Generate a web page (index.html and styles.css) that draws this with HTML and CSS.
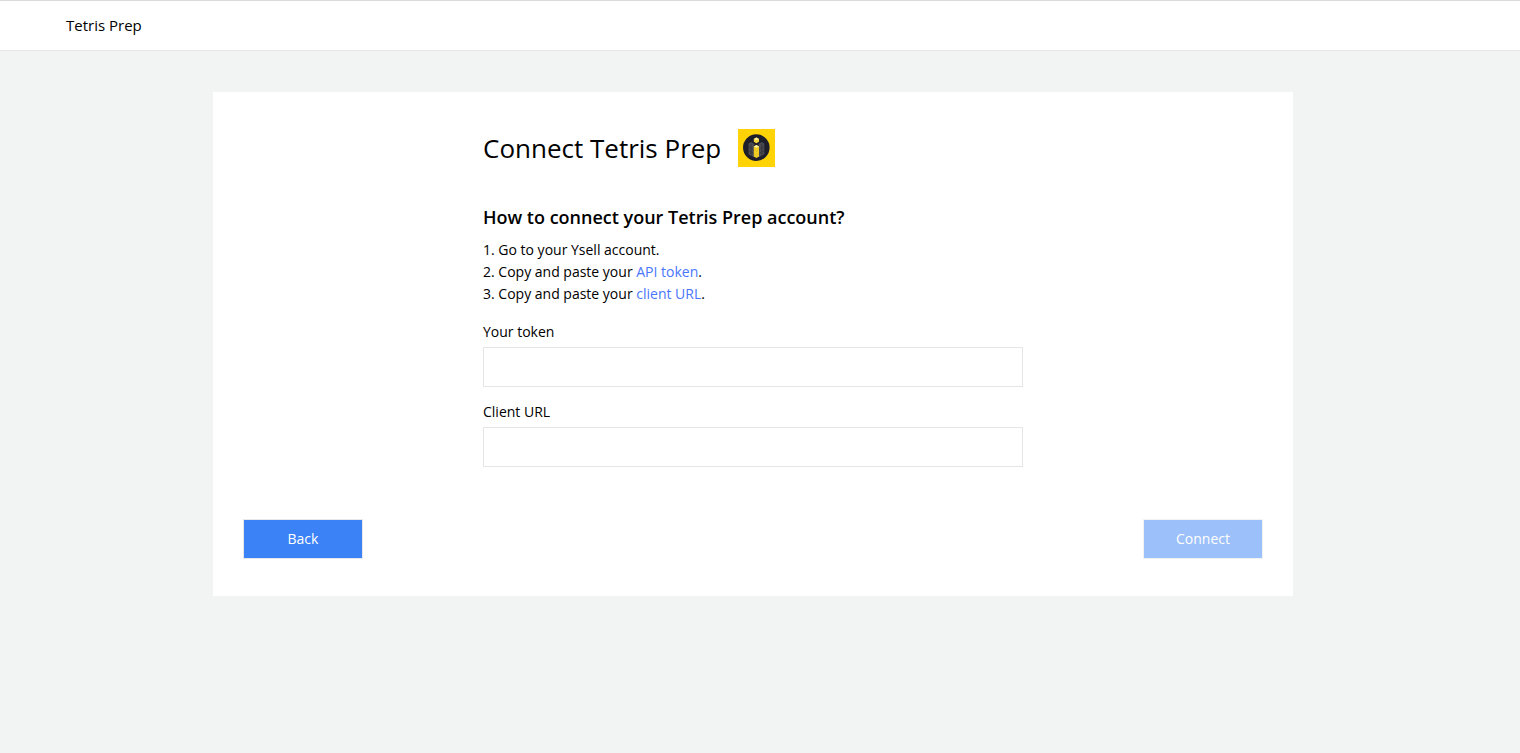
FILE: index.html
```html
<!DOCTYPE html>
<html lang="en">
<head>
    <meta charset="UTF-8">
    <meta name="viewport" content="width=device-width, initial-scale=1.0">
    <title>Connect Tetris Prep</title>
    <link rel="stylesheet" href="styles.css">
</head>
<body>

<header class="topbar">Tetris Prep</header>

<main class="page">
    <form class="card">
        <div class="content">
            <div class="title">
                <h1>Connect Tetris Prep</h1>
                <svg class="logo" viewBox="0 0 37 38" aria-hidden="true">
                    <rect width="37" height="38" fill="#ffd305"/>
                    <circle cx="18.3" cy="18.6" r="13.3" fill="#1e1e2b"/>
                    <path d="M10.5 14.5l2.6-1.5 3.2 2v13.5l-5.8-3.2zM26.3 14.5l-2.6-1.5-3.2 2v13.5l5.8-3.2z" fill="#4b4b50"/>
                    <path d="M10.5 17.5l5 3M10.5 21.5l5 3M26.3 17.5l-5 3M26.3 21.5l-5 3M13 14.8v12M23.8 14.8v12" stroke="#2b2b34" stroke-width=".6" fill="none"/>
                    <path d="M18.4 8.5l2.6 1.4v2.9l-2.6 1.5-2.6-1.5v-2.9z" fill="#f5d33a"/>
                    <path d="M18.4 8.5l2.6 1.4-2.6 1.4-2.6-1.4z" fill="#fff0a0"/>
                    <path d="M18.4 16l2.6 1.4v10l-2.6 1.5-2.6-1.5v-10z" fill="#f2ce25"/>
                    <path d="M18.4 16l2.6 1.4-2.6 1.4-2.6-1.4z" fill="#fff0a0"/>
                    <path d="M15.8 21l2.6 1.4 2.6-1.4M15.8 24.5l2.6 1.4 2.6-1.4" stroke="#d3b01f" stroke-width=".5" fill="none"/>
                </svg>
            </div>

            <h2>How to connect your Tetris Prep account?</h2>
            <ol class="steps">
                <li>Go to your Ysell account.</li>
                <li>Copy and paste your <a href="#token">API token</a>.</li>
                <li>Copy and paste your <a href="#url">client URL</a>.</li>
            </ol>

            <div class="field">
                <label for="token">Your token</label>
                <input type="text" id="token">
            </div>
            <div class="field">
                <label for="url">Client URL</label>
                <input type="text" id="url">
            </div>
        </div>

        <div class="actions">
            <button type="button">Back</button>
            <button type="submit" disabled>Connect</button>
        </div>
    </form>
</main>

</body>
</html>
```

FILE: styles.css
```css
* {
    box-sizing: border-box;
}
body {
    margin: 0;
    font-family: "Segoe UI", "Open Sans", "Noto Sans", sans-serif;
    font-size: 14px;
    line-height: 22px;
    color: #000;
    background-color: #f1f4f3;
}
.topbar {
    padding: 14px 66px;
    font-size: 15px;
    line-height: 21px;
    background: white;
    border-top: 1px solid #dadada;
    border-bottom: 1px solid #e5e8e7;
}
.page {
    padding: 41px 14px 41px 0;
}
.card {
    max-width: 1080px;
    margin: auto;
    padding: 37px 30px;
    background: white;
}
.content {
    max-width: 540px;
    margin: auto;
}
.title {
    display: flex;
    align-items: center;
    gap: 17px;
}
.logo {
    width: 37px;
    height: 38px;
}
h1 {
    margin: 0;
    font-size: 26px;
    font-weight: normal;
    line-height: 38px;
}
h2 {
    margin: 38px 0 10px;
    font-size: 18px;
    font-weight: 600;
    line-height: 24px;
}
.steps {
    margin: 0 0 16px;
    padding: 0;
    list-style-position: inside;
    list-style-type: decimal;
}
a {
    color: #4a76fd;
    text-decoration: none;
}
.field {
    display: flex;
    flex-direction: column;
    gap: 4px;
    margin-bottom: 14px;
}
.field:last-child {
    margin-bottom: 0;
}
input {
    width: 100%;
    height: 40px;
    padding: 8px;
    font: inherit;
    border: 1px solid #e5e5e5;
}
.actions {
    display: flex;
    justify-content: space-between;
    margin-top: 52px;
}
button {
    width: 120px;
    height: 40px;
    font: inherit;
    color: white;
    background-color: #3b82f6;
    border: 1px solid #e5e7eb;
    cursor: pointer;
}
button:disabled {
    opacity: 0.5;
    cursor: default;
}
```
